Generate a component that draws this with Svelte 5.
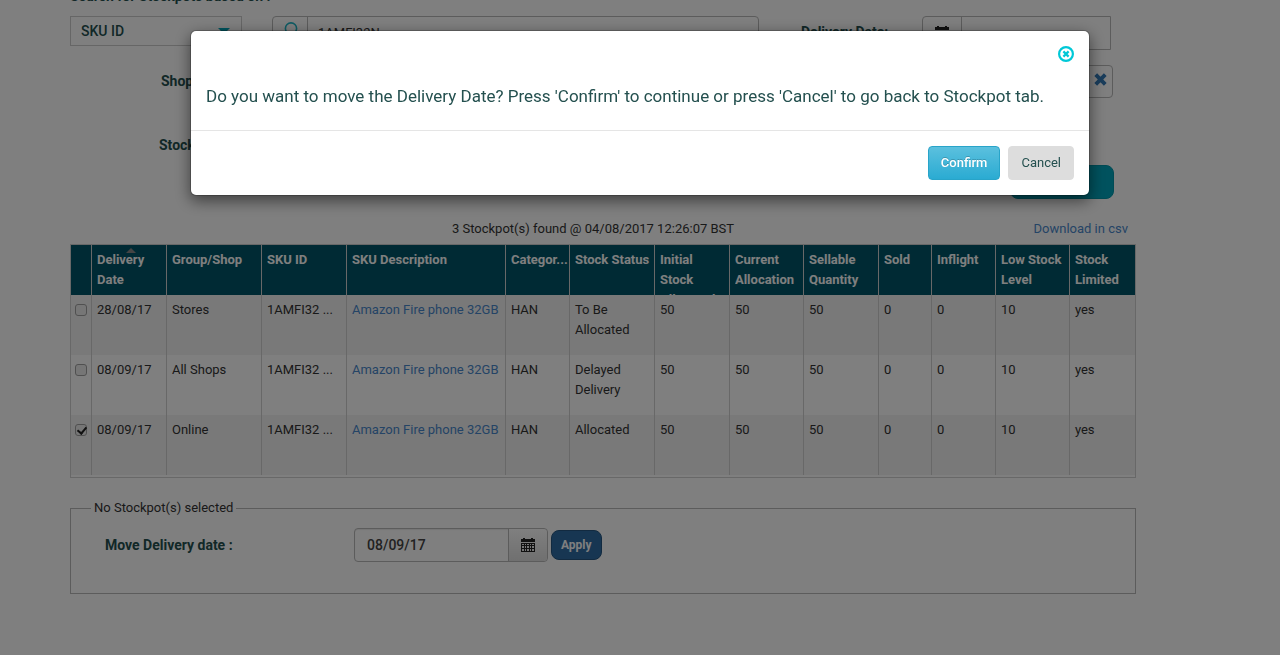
<script>
  const columns = [
    { key: 'date', label: 'Delivery Date', width: 75, sorted: true },
    { key: 'group', label: 'Group/Shop', width: 95 },
    { key: 'sku', label: 'SKU ID', width: 85 },
    { key: 'description', label: 'SKU Description', width: 159, link: true },
    { key: 'category', label: 'Categor...', width: 64 },
    { key: 'status', label: 'Stock Status', width: 85 },
    { key: 'initial', label: 'Initial Stock Allocated', width: 75 },
    { key: 'current', label: 'Current Allocation', width: 74 },
    { key: 'sellable', label: 'Sellable Quantity', width: 75 },
    { key: 'sold', label: 'Sold', width: 53 },
    { key: 'inflight', label: 'Inflight', width: 64 },
    { key: 'low', label: 'Low Stock Level', width: 74 },
    { key: 'limited', label: 'Stock Limited', width: 65 }
  ];
  const checkWidth = 21;
  const total = columns.reduce((sum, c) => sum + c.width, checkWidth);
  const share = (w) => `width: ${(w / total) * 100}%`;

  const common = {
    sku: '1AMFI32 ...', description: 'Amazon Fire phone 32GB', category: 'HAN',
    initial: 50, current: 50, sellable: 50, sold: 0, inflight: 0, low: 10, limited: 'yes'
  };
  let rows = $state([
    { ...common, date: '28/08/17', group: 'Stores', status: 'To Be Allocated', checked: false },
    { ...common, date: '08/09/17', group: 'All Shops', status: 'Delayed Delivery', checked: false },
    { ...common, date: '08/09/17', group: 'Online', status: 'Allocated', checked: true }
  ]);
</script>

{#snippet calendar()}
  <svg class="calendar" viewBox="0 0 14 14" width="14" height="14" aria-hidden="true">
    <path d="M0 1h2V0h2v1h6V0h2v1h2v3H0z" />
    <path fill-rule="evenodd" d="M0 5h14v9H0zM1 6v1h2V6zm3 0v1h1V6zm2 0v1h2V6zm3 0v1h1V6zm2 0v1h2V6zM1 8v2h2V8zm3 0v2h1V8zm2 0v2h2V8zm3 0v2h1V8zm2 0v2h2V8zM1 11v2h2v-2zm3 0v2h1v-2zm2 0v2h2v-2zm3 0v2h1v-2zm2 0v2h2v-2z" />
  </svg>
{/snippet}

<main class="page">
  <label class="title" for="search-by">Search for Stockpots based on :</label>
  <div class="filters">
    <div class="search-by">
      <select id="search-by"><option>SKU ID</option></select>
    </div>
    <div class="group search">
      <button class="addon" aria-label="Search">
        <svg viewBox="0 0 16 16" width="16" height="16" fill="none" stroke="#1fb8c8" stroke-width="1.6" aria-hidden="true">
          <circle cx="9" cy="6.5" r="5.6" /><path d="M5 10.5L1 15" />
        </svg>
      </button>
      <input aria-label="Search value" value="1AMFI32N" />
    </div>
    <label class="date-label" for="delivery">Delivery Date:</label>
    <div class="group delivery">
      <button class="addon" aria-label="Open calendar">{@render calendar()}</button>
      <input id="delivery" />
    </div>
  </div>
  <div class="shop-row">
    <span class="side-label">Shop :</span>
    <button class="clear" aria-label="Clear">
      <svg viewBox="0 0 12 12" width="13" height="13" aria-hidden="true"><path d="M1.6 1.6l8.8 8.8M10.4 1.6l-8.8 8.8" stroke="#337ab7" stroke-width="3.6" /></svg>
    </button>
  </div>
  <div class="stock-row"><span class="side-label">Stock :</span></div>
  <div class="actions"><button class="submit" aria-label="Search stockpots"></button></div>

  <div class="summary">
    <span class="found">3 Stockpot(s) found @ 04/08/2017 12:26:07 BST</span>
    <a href="#csv">Download in csv</a>
  </div>

  <div class="grid">
    <table>
      <colgroup>
        <col style={share(checkWidth)} />
        {#each columns as c}<col style={share(c.width)} />{/each}
      </colgroup>
      <thead>
        <tr>
          <th></th>
          {#each columns as c}
            <th class:sorted={c.sorted}><div class="head">{c.label}</div></th>
          {/each}
        </tr>
      </thead>
      <tbody>
        {#each rows as row}
          <tr>
            <td class="check"><input type="checkbox" aria-label="Select stockpot" bind:checked={row.checked} /></td>
            {#each columns as c}
              <td class:nowrap={c.link || c.key === 'sku'}>{#if c.link}<a href="#sku">{row[c.key]}</a>{:else}{row[c.key]}{/if}</td>
            {/each}
          </tr>
        {/each}
      </tbody>
    </table>
  </div>

  <fieldset>
    <legend>No Stockpot(s) selected</legend>
    <div class="move">
      <label for="move-date">Move Delivery date :</label>
      <div class="group move-group">
        <input id="move-date" value="08/09/17" />
        <button class="addon shaded" aria-label="Open calendar">{@render calendar()}</button>
      </div>
      <button class="apply">Apply</button>
    </div>
  </fieldset>
</main>

<div class="backdrop">
  <div class="modal" role="dialog" aria-modal="true" aria-labelledby="question">
    <div class="modal-head">
      <button class="close" aria-label="Close">
        <svg viewBox="0 0 16 16" width="16" height="16" fill="none" stroke="#00c8d7" aria-hidden="true">
          <circle cx="8" cy="8" r="6.9" stroke-width="2.2" /><path d="M5.4 5.4l5.2 5.2M10.6 5.4l-5.2 5.2" stroke-width="2.2" />
        </svg>
      </button>
    </div>
    <p id="question">Do you want to move the Delivery Date? Press 'Confirm' to continue or press 'Cancel' to go back to Stockpot tab.</p>
    <div class="modal-foot">
      <button class="confirm">Confirm</button>
      <button class="cancel">Cancel</button>
    </div>
  </div>
</div>

<style>
  :global(body) {
    margin: 0;
    background: #fff;
    color: #333;
    font: 13px/20px Roboto, "Liberation Sans", sans-serif;
  }
  * { box-sizing: border-box; }
  button, input, select { font: inherit; color: inherit; margin: 0; }
  a { color: #4a88cc; text-decoration: none; }

  .page { margin: -14px 144px 0 70px; }
  label, .side-label { display: block; color: #24504f; font-weight: 700; font-size: 14px; }
  .title { margin-bottom: 10px; }

  .filters { display: flex; align-items: flex-start; padding-right: 25px; }
  .search-by { position: relative; width: 172px; margin-right: 30px; }
  .search-by select {
    display: block; width: 100%; height: 30px; padding: 0 10px;
    appearance: none; background: transparent; border: 1px solid #ccc; border-radius: 0;
    color: #24504f; font-size: 14px; font-weight: 500;
  }
  .search-by::after {
    content: ""; position: absolute; right: 12px; top: 12px;
    border: 6px solid transparent; border-top-color: #00a8bd; border-bottom: 0;
  }
  .group { display: flex; height: 34px; border: 1px solid #b8b8b8; border-radius: 4px; }
  .group input { flex: 1; min-width: 0; padding: 0 10px; border: 0; background: transparent; font-size: 14px; }
  .addon {
    display: flex; align-items: center; justify-content: center; width: 35px; padding: 0;
    border: 0; border-right: 1px solid #b8b8b8; background: transparent;
  }
  .search { flex: 1; }
  .search .addon { padding-bottom: 6px; }
  .search input { font-size: 13px; }
  .date-label { width: 121px; margin-left: 42px; line-height: 32px; }
  .delivery { width: 189px; border-radius: 4px 0 0 0; }
  .delivery .addon { width: 39px; }

  .shop-row { display: flex; justify-content: space-between; height: 33px; margin-top: 15px; padding: 0 23px 0 91px; }
  .shop-row .side-label { line-height: 32px; }
  .clear {
    display: flex; align-items: center; justify-content: flex-end; width: 60px; padding: 0 5px 4px;
    border: 1px solid #b8b8b8; border-radius: 4px; background: transparent;
  }
  .stock-row { margin-top: 37px; padding-left: 89px; }
  .actions { display: flex; justify-content: flex-end; margin-top: 10px; padding-right: 22px; }
  .submit { width: 104px; height: 34px; border: 1px solid #0097aa; border-radius: 8px; background: #00a5bd; }

  .summary { display: grid; grid-template-columns: 1fr auto 1fr; margin: 20px 0 5px; padding-right: 8px; }
  .found { grid-column: 2; padding-right: 12px; }
  .summary a { text-align: right; }

  .grid { padding-bottom: 2px; border: 1px solid #d0d0d0; }
  table { width: 100%; table-layout: fixed; border-collapse: separate; border-spacing: 0; }
  th, td { padding: 5px 0 5px 5px; border-right: 1px solid #d0d0d0; text-align: left; vertical-align: top; }
  th:last-child, td:last-child { border-right: 0; }
  th { height: 50px; padding: 0 0 0 5px; background: #005468; color: #fff; }
  th.sorted { position: relative; }
  th.sorted::before {
    content: ""; position: absolute; left: 34px; top: 3px;
    border: 5px solid transparent; border-bottom-color: #888; border-top: 0;
  }
  .head { height: 50px; padding-top: 5px; overflow: hidden; }
  td { height: 60px; }
  tbody tr:nth-child(odd) { background: #f3f3f3; }
  .nowrap { white-space: nowrap; overflow: hidden; }
  .check { padding: 9px 0 0 4px; }
  .check input { display: block; width: 12px; height: 12px; appearance: none; border: 1px solid #a0a0a0; border-radius: 3px; background: #ededed; }
  .check input:checked::after {
    content: ""; display: block; width: 4px; height: 7px; margin: 0 0 0 3px;
    border: solid #222; border-width: 0 2px 2px 0; transform: rotate(40deg);
  }

  fieldset { height: 96px; margin: 20px 0 0; padding: 0 20px; border: 1px solid #b8b8b8; }
  legend { padding: 0 3px; }
  .move { display: flex; align-items: center; padding: 10px 0 0 14px; }
  .move label { width: 249px; }
  .move-group { width: 194px; margin-right: 3px; box-shadow: inset 0 1px 1px rgba(0, 0, 0, .08); }
  .move-group input { padding: 0 12px; color: #444; font-weight: 500; }
  .addon.shaded { width: 39px; border-right: 0; border-left: 1px solid #b8b8b8; background: linear-gradient(#fff, #e0e0e0); border-radius: 0 4px 4px 0; }
  .calendar { display: block; fill: #222; }
  .apply { height: 30px; padding: 0 9px; border: 1px solid #245580; border-radius: 8px; background: #2f6da5; color: #fff; font-size: 12px; font-weight: 700; }

  .backdrop { position: fixed; inset: 0; padding: 30px 20px; background: rgba(0, 0, 0, .5); }
  .modal {
    max-width: 900px; margin: 0 auto; background: #fff; background-clip: padding-box;
    border: 1px solid rgba(0, 0, 0, .2); border-radius: 6px; box-shadow: 0 5px 15px rgba(0, 0, 0, .5);
  }
  .modal-head { display: flex; justify-content: flex-end; padding: 15px 15px 0; }
  .close { padding: 0; border: 0; background: none; line-height: 0; }
  p { margin: 0; padding: 24px 15px 24px; color: #24504f; font-size: 17px; line-height: 20px; }
  .modal-foot { display: flex; justify-content: flex-end; gap: 8px; padding: 15px; border-top: 1px solid #e5e5e5; }
  .modal-foot button { height: 34px; padding: 0 12px; border-radius: 4px; }
  .confirm { border: 1px solid #28a4c9; background: linear-gradient(#5bc0de, #2aabd2); color: #fff; font-weight: 500; text-shadow: 0 -1px 0 rgba(0, 0, 0, .2); }
  .cancel { border: 1px solid #ddd; background: #ddd; color: #24504f; }
</style>
